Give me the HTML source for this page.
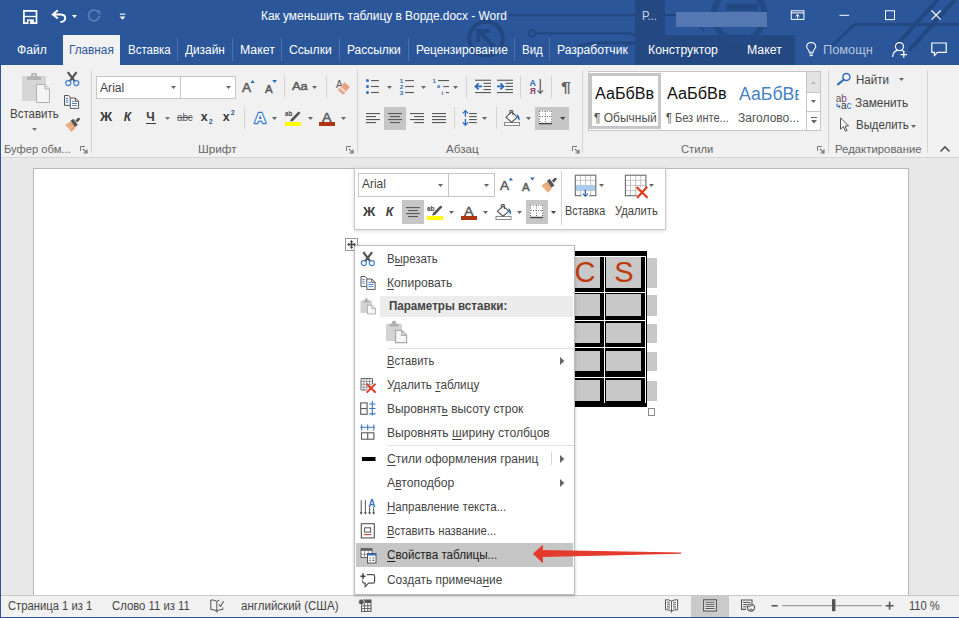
<!DOCTYPE html><html lang="ru"><head><meta charset="utf-8"><title>Word</title><style>html,body{margin:0;padding:0}body{width:959px;height:618px;position:relative;overflow:hidden;background:#e6e6e6;font-family:"Liberation Sans", sans-serif;}.a{position:absolute;display:block}.t{position:absolute;white-space:nowrap;line-height:1;transform-origin:0 0}u{text-decoration-thickness:1px;text-underline-offset:2px}</style></head><body>
<div class="a" style="left:0px;top:0px;width:959px;height:65px;background:#2b579a;"></div>
<div class="a" style="left:635px;top:0px;width:30px;height:35px;background:#244882;"></div>
<div class="a" style="left:635px;top:35px;width:160px;height:30px;background:#244882;"></div>
<svg class="a" style="left:0;top:0" width="959" height="65" viewBox="0 0 959 65"><g fill="none" stroke="#224781" stroke-width="2.4"><circle cx="486" cy="38.6" r="16.8" stroke-width="4"/><path d="M494.5 47L479.5 32M478.4 42V30.8H489.6" stroke-width="3.8"/><path d="M509 15.2H635" stroke-width="2.2"/><circle cx="532" cy="33.4" r="3.3" stroke-width="2"/><path d="M535.6 33.4H628Q633 33.6 635 36" stroke-width="2.2"/><path d="M577 46.4Q586 43.2 600 43H635" stroke-width="2.8"/><path d="M665 15.2H682Q690 15.6 696 22L704 31" stroke-width="1.8" stroke="#214378"/><circle cx="739" cy="15.4" r="25.4" stroke-width="6" stroke="#244a86"/><path d="M832.6 45L854.6 24.4H959" stroke-width="3"/><path d="M895 47L937.4 0M909 50.5L954.6 0" stroke-width="4"/></g><rect x="726" y="3.8" width="31.5" height="6.5" fill="#224781"/></svg>
<div class="a" style="left:676px;top:11.5px;width:91px;height:15.5px;background:#5578b2;"></div>
<div class="a" style="left:63px;top:35px;width:57px;height:31px;background:#f1f1f1;"></div>
<div class="a" style="left:0px;top:65px;width:959px;height:93px;background:#f1f1f1;"></div>
<div class="a" style="left:0px;top:157px;width:959px;height:1px;background:#d6d6d6;"></div>
<div class="a" style="left:0px;top:158px;width:959px;height:437px;background:#e8e8e8;"></div>
<div class="a" style="left:33px;top:168px;width:876px;height:430px;background:#ffffff;border:1px solid #b8b8b8;box-sizing:border-box;"></div>
<div class="a" style="left:0px;top:595px;width:959px;height:22px;background:#f1f1f1;"></div>
<div class="a" style="left:0px;top:595px;width:959px;height:1px;background:#c8c8c8;"></div>
<div class="a" style="left:0px;top:616.6px;width:959px;height:1.4px;background:#2b579a;"></div>
<div class="a" style="left:0px;top:0px;width:1.2px;height:618px;background:#2b579a;"></div>
<div class="a" style="left:177px;top:38px;width:1px;height:23px;background:#4d72ab;"></div>
<div class="a" style="left:232px;top:38px;width:1px;height:23px;background:#4d72ab;"></div>
<div class="a" style="left:281px;top:38px;width:1px;height:23px;background:#4d72ab;"></div>
<div class="a" style="left:339px;top:38px;width:1px;height:23px;background:#4d72ab;"></div>
<div class="a" style="left:408px;top:38px;width:1px;height:23px;background:#4d72ab;"></div>
<div class="a" style="left:514px;top:38px;width:1px;height:23px;background:#4d72ab;"></div>
<div class="a" style="left:549px;top:38px;width:1px;height:23px;background:#4d72ab;"></div>
<div class="a" style="left:91px;top:70px;width:1px;height:83px;background:#d4d4d4;"></div>
<div class="a" style="left:357px;top:70px;width:1px;height:83px;background:#d4d4d4;"></div>
<div class="a" style="left:582px;top:70px;width:1px;height:83px;background:#d4d4d4;"></div>
<div class="a" style="left:828px;top:70px;width:1px;height:83px;background:#d4d4d4;"></div>
<div class="a" style="left:927px;top:70px;width:1px;height:83px;background:#d4d4d4;"></div>
<div class="a" style="left:284px;top:76px;width:1px;height:22px;background:#d4d4d4;"></div>
<div class="a" style="left:326px;top:76px;width:1px;height:22px;background:#d4d4d4;"></div>
<div class="a" style="left:466px;top:76px;width:1px;height:22px;background:#d4d4d4;"></div>
<div class="a" style="left:520px;top:76px;width:1px;height:22px;background:#d4d4d4;"></div>
<div class="a" style="left:551px;top:76px;width:1px;height:22px;background:#d4d4d4;"></div>
<div class="a" style="left:244px;top:107px;width:1px;height:22px;background:#d4d4d4;"></div>
<div class="a" style="left:454px;top:107px;width:1px;height:22px;background:#d4d4d4;"></div>
<div class="a" style="left:496px;top:107px;width:1px;height:22px;background:#d4d4d4;"></div>
<svg class="a" style="left:80.3px;top:146px;" width="8" height="8" viewBox="0 0 8 8"><path d="M0.5 5V0.5H5" fill="none" stroke="#777" stroke-width="1"/><path d="M3 3L7 7M7 3.5V7H3.5" fill="none" stroke="#777" stroke-width="1.2"/></svg>
<svg class="a" style="left:346px;top:146px;" width="8" height="8" viewBox="0 0 8 8"><path d="M0.5 5V0.5H5" fill="none" stroke="#777" stroke-width="1"/><path d="M3 3L7 7M7 3.5V7H3.5" fill="none" stroke="#777" stroke-width="1.2"/></svg>
<svg class="a" style="left:571.5px;top:146px;" width="8" height="8" viewBox="0 0 8 8"><path d="M0.5 5V0.5H5" fill="none" stroke="#777" stroke-width="1"/><path d="M3 3L7 7M7 3.5V7H3.5" fill="none" stroke="#777" stroke-width="1.2"/></svg>
<svg class="a" style="left:816.8px;top:146px;" width="8" height="8" viewBox="0 0 8 8"><path d="M0.5 5V0.5H5" fill="none" stroke="#777" stroke-width="1"/><path d="M3 3L7 7M7 3.5V7H3.5" fill="none" stroke="#777" stroke-width="1.2"/></svg>
<svg class="a" style="left:939px;top:145px;" width="12" height="8" viewBox="0 0 12 8"><path d="M1.5 6.5L6 2L10.5 6.5" fill="none" stroke="#555" stroke-width="1.6"/></svg>
<svg class="a" style="left:31.5px;top:128px;" width="5" height="3" viewBox="0 0 5 3"><path d="M0 0H5L2.5 3Z" fill="#777"/></svg>
<div class="a" style="left:96px;top:76px;width:85px;height:23px;background:#fff;border:1px solid #c6c6c6;box-sizing:border-box;"></div>
<div class="a" style="left:180px;top:76px;width:56px;height:23px;background:#fff;border:1px solid #c6c6c6;box-sizing:border-box;"></div>
<svg class="a" style="left:171px;top:86px;" width="5" height="3" viewBox="0 0 5 3"><path d="M0 0H5L2.5 3Z" fill="#666"/></svg>
<svg class="a" style="left:226px;top:86px;" width="5" height="3" viewBox="0 0 5 3"><path d="M0 0H5L2.5 3Z" fill="#666"/></svg>
<div class="a" style="left:146px;top:122.8px;width:9.6px;height:1.3px;background:#3b3b3b;"></div>
<svg class="a" style="left:165px;top:117px;" width="5" height="3" viewBox="0 0 5 3"><path d="M0 0H5L2.5 3Z" fill="#777"/></svg>
<svg class="a" style="left:312px;top:86px;" width="5" height="3" viewBox="0 0 5 3"><path d="M0 0H5L2.5 3Z" fill="#666"/></svg>
<svg class="a" style="left:272px;top:116.5px;" width="5" height="3" viewBox="0 0 5 3"><path d="M0 0H5L2.5 3Z" fill="#666"/></svg>
<div class="a" style="left:285px;top:122px;width:16px;height:4px;background:#ffff00;"></div>
<svg class="a" style="left:307.5px;top:116.5px;" width="5" height="3" viewBox="0 0 5 3"><path d="M0 0H5L2.5 3Z" fill="#666"/></svg>
<div class="a" style="left:319px;top:122px;width:16px;height:4px;background:#b03312;"></div>
<svg class="a" style="left:341px;top:116.5px;" width="5" height="3" viewBox="0 0 5 3"><path d="M0 0H5L2.5 3Z" fill="#666"/></svg>
<svg class="a" style="left:387px;top:86px;" width="5" height="3" viewBox="0 0 5 3"><path d="M0 0H5L2.5 3Z" fill="#666"/></svg>
<svg class="a" style="left:421px;top:86px;" width="5" height="3" viewBox="0 0 5 3"><path d="M0 0H5L2.5 3Z" fill="#666"/></svg>
<svg class="a" style="left:453px;top:86px;" width="5" height="3" viewBox="0 0 5 3"><path d="M0 0H5L2.5 3Z" fill="#666"/></svg>
<div class="a" style="left:384px;top:107px;width:22px;height:23px;background:#c6c6c6;"></div>
<svg class="a" style="left:366px;top:113px;" width="14" height="14" viewBox="0 0 14 14"><rect x="0" y="0.00" width="14" height="1.1" fill="#5a5a5a"/><rect x="0" y="3.00" width="10" height="1.1" fill="#5a5a5a"/><rect x="0" y="6.00" width="14" height="1.1" fill="#5a5a5a"/><rect x="0" y="9.00" width="10" height="1.1" fill="#5a5a5a"/></svg>
<svg class="a" style="left:388px;top:113px;" width="14" height="14" viewBox="0 0 14 14"><rect x="0.0" y="0.00" width="14" height="1.1" fill="#5a5a5a"/><rect x="2.0" y="3.00" width="10" height="1.1" fill="#5a5a5a"/><rect x="0.0" y="6.00" width="14" height="1.1" fill="#5a5a5a"/><rect x="2.0" y="9.00" width="10" height="1.1" fill="#5a5a5a"/></svg>
<svg class="a" style="left:410px;top:113px;" width="14" height="14" viewBox="0 0 14 14"><rect x="0" y="0.00" width="14" height="1.1" fill="#5a5a5a"/><rect x="4" y="3.00" width="10" height="1.1" fill="#5a5a5a"/><rect x="0" y="6.00" width="14" height="1.1" fill="#5a5a5a"/><rect x="4" y="9.00" width="10" height="1.1" fill="#5a5a5a"/></svg>
<svg class="a" style="left:432px;top:113px;" width="14" height="14" viewBox="0 0 14 14"><rect x="0" y="0.00" width="14" height="1.1" fill="#5a5a5a"/><rect x="0" y="3.00" width="14" height="1.1" fill="#5a5a5a"/><rect x="0" y="6.00" width="14" height="1.1" fill="#5a5a5a"/><rect x="0" y="9.00" width="14" height="1.1" fill="#5a5a5a"/></svg>
<svg class="a" style="left:482px;top:117px;" width="5" height="3" viewBox="0 0 5 3"><path d="M0 0H5L2.5 3Z" fill="#666"/></svg>
<svg class="a" style="left:526px;top:117px;" width="5" height="3" viewBox="0 0 5 3"><path d="M0 0H5L2.5 3Z" fill="#666"/></svg>
<div class="a" style="left:535px;top:107px;width:34px;height:23px;background:#c6c6c6;"></div>
<svg class="a" style="left:559.5px;top:117px;" width="5.5" height="3" viewBox="0 0 5.5 3"><path d="M0 0H5.5L2.75 3Z" fill="#444"/></svg>
<div class="a" style="left:588px;top:71px;width:233px;height:60px;background:#fff;border:1px solid #c6c6c6;box-sizing:border-box;"></div>
<div class="a" style="left:589px;top:73px;width:72px;height:56px;border:3px solid #c6c6c6;box-sizing:border-box;"></div>
<div class="a" style="left:807px;top:72px;width:13px;height:21px;background:#e3e3e3;"></div>
<div class="a" style="left:806px;top:72px;width:1px;height:58px;background:#c6c6c6;"></div>
<div class="a" style="left:807px;top:92px;width:13px;height:1px;background:#c6c6c6;"></div>
<div class="a" style="left:807px;top:111px;width:13px;height:1px;background:#c6c6c6;"></div>
<svg class="a" style="left:811px;top:81px;" width="5" height="3" viewBox="0 0 5 3"><path d="M0 3H5L2.5 0Z" fill="#bbb"/></svg>
<svg class="a" style="left:811px;top:100px;" width="5" height="3" viewBox="0 0 5 3"><path d="M0 0H5L2.5 3Z" fill="#666"/></svg>
<svg class="a" style="left:810.5px;top:117px;" width="6" height="8" viewBox="0 0 6 8"><path d="M0 0.5H6" stroke="#666" stroke-width="1"/><path d="M0 3H6L3 6.5Z" fill="#666"/></svg>
<svg class="a" style="left:899px;top:78px;" width="5" height="3" viewBox="0 0 5 3"><path d="M0 0H5L2.5 3Z" fill="#666"/></svg>
<svg class="a" style="left:911px;top:124.5px;" width="5" height="3" viewBox="0 0 5 3"><path d="M0 0H5L2.5 3Z" fill="#666"/></svg>
<div class="a" style="left:560px;top:250.5px;width:86.7px;height:156.5px;background:#000;"></div>
<div class="a" style="left:560px;top:257px;width:40px;height:31px;background:#c8c8c8;"></div>
<div class="a" style="left:606px;top:257px;width:35px;height:31px;background:#c8c8c8;"></div>
<div class="a" style="left:647.4px;top:258px;width:9.6px;height:30px;background:#c8c8c8;"></div>
<div class="a" style="left:560px;top:294px;width:40px;height:22px;background:#c8c8c8;"></div>
<div class="a" style="left:606px;top:294px;width:35px;height:22px;background:#c8c8c8;"></div>
<div class="a" style="left:647.4px;top:295px;width:9.6px;height:21px;background:#c8c8c8;"></div>
<div class="a" style="left:560px;top:322.5px;width:40px;height:20.5px;background:#c8c8c8;"></div>
<div class="a" style="left:606px;top:322.5px;width:35px;height:20.5px;background:#c8c8c8;"></div>
<div class="a" style="left:647.4px;top:323.5px;width:9.6px;height:19.5px;background:#c8c8c8;"></div>
<div class="a" style="left:560px;top:350.5px;width:40px;height:20.5px;background:#c8c8c8;"></div>
<div class="a" style="left:606px;top:350.5px;width:35px;height:20.5px;background:#c8c8c8;"></div>
<div class="a" style="left:647.4px;top:351.5px;width:9.6px;height:19.5px;background:#c8c8c8;"></div>
<div class="a" style="left:560px;top:379.5px;width:40px;height:21.5px;background:#c8c8c8;"></div>
<div class="a" style="left:606px;top:379.5px;width:35px;height:21.5px;background:#c8c8c8;"></div>
<div class="a" style="left:647.4px;top:380.5px;width:9.6px;height:20.5px;background:#c8c8c8;"></div>
<div class="a" style="left:560px;top:255.6px;width:85.5px;height:1px;background:#fff;"></div>
<div class="a" style="left:560px;top:292.2px;width:85.5px;height:1px;background:#fff;"></div>
<div class="a" style="left:560px;top:320.3px;width:85.5px;height:1px;background:#fff;"></div>
<div class="a" style="left:560px;top:347.3px;width:85.5px;height:1px;background:#fff;"></div>
<div class="a" style="left:560px;top:376.5px;width:85.5px;height:1px;background:#fff;"></div>
<div class="a" style="left:604px;top:255.6px;width:1px;height:147px;background:#fff;"></div>
<div class="a" style="left:645px;top:255.6px;width:1px;height:147px;background:#fff;"></div>
<div class="a" style="left:647.5px;top:408px;width:7.5px;height:7.5px;background:#fff;border:1px solid #8a8a8a;box-sizing:border-box;"></div>
<div class="a" style="left:345px;top:238.3px;width:13px;height:12.5px;background:#fff;border:1px solid #9a9a9a;box-sizing:border-box;"></div>
<div class="a" style="left:354px;top:167.5px;width:311.5px;height:62px;background:#fff;border:1px solid #c8c8c8;box-sizing:border-box;box-shadow:0 1px 4px rgba(0,0,0,0.16);"></div>
<div class="a" style="left:358px;top:173px;width:91px;height:24px;background:#fff;border:1px solid #c6c6c6;box-sizing:border-box;"></div>
<div class="a" style="left:448px;top:173px;width:46.5px;height:24px;background:#fff;border:1px solid #c6c6c6;box-sizing:border-box;"></div>
<svg class="a" style="left:438px;top:183.5px;" width="5" height="3" viewBox="0 0 5 3"><path d="M0 0H5L2.5 3Z" fill="#666"/></svg>
<svg class="a" style="left:484px;top:183.5px;" width="5" height="3" viewBox="0 0 5 3"><path d="M0 0H5L2.5 3Z" fill="#666"/></svg>
<div class="a" style="left:560.5px;top:171px;width:1px;height:54px;background:#d4d4d4;"></div>
<div class="a" style="left:402px;top:200px;width:22px;height:24px;background:#c6c6c6;"></div>
<svg class="a" style="left:406px;top:206.5px;" width="14" height="14" viewBox="0 0 14 14"><rect x="0.0" y="0.00" width="14" height="1.1" fill="#5a5a5a"/><rect x="2.0" y="3.00" width="10" height="1.1" fill="#5a5a5a"/><rect x="0.0" y="6.00" width="14" height="1.1" fill="#5a5a5a"/><rect x="2.0" y="9.00" width="10" height="1.1" fill="#5a5a5a"/></svg>
<div class="a" style="left:427px;top:216px;width:16px;height:4px;background:#ffff00;"></div>
<svg class="a" style="left:449px;top:210.5px;" width="5" height="3" viewBox="0 0 5 3"><path d="M0 0H5L2.5 3Z" fill="#666"/></svg>
<div class="a" style="left:461px;top:216px;width:16px;height:4px;background:#b03312;"></div>
<svg class="a" style="left:483px;top:210.5px;" width="5" height="3" viewBox="0 0 5 3"><path d="M0 0H5L2.5 3Z" fill="#666"/></svg>
<svg class="a" style="left:517px;top:210.5px;" width="5" height="3" viewBox="0 0 5 3"><path d="M0 0H5L2.5 3Z" fill="#666"/></svg>
<div class="a" style="left:526px;top:200px;width:21.5px;height:24px;background:#c6c6c6;"></div>
<svg class="a" style="left:551px;top:210.5px;" width="5" height="3" viewBox="0 0 5 3"><path d="M0 0H5L2.5 3Z" fill="#444"/></svg>
<svg class="a" style="left:599px;top:183.5px;" width="5" height="3" viewBox="0 0 5 3"><path d="M0 0H5L2.5 3Z" fill="#666"/></svg>
<svg class="a" style="left:649px;top:183.5px;" width="5" height="3" viewBox="0 0 5 3"><path d="M0 0H5L2.5 3Z" fill="#666"/></svg>
<div class="a" style="left:354px;top:245px;width:221px;height:349.5px;background:#fff;border:1px solid #bdbdbd;box-sizing:border-box;box-shadow:0 1px 3px rgba(0,0,0,0.22);"></div>
<div class="a" style="left:380px;top:295.5px;width:193px;height:21px;background:#ececec;"></div>
<div class="a" style="left:388px;top:347.5px;width:186px;height:1px;background:#e1e1e1;"></div>
<div class="a" style="left:388px;top:445px;width:186px;height:1px;background:#e1e1e1;"></div>
<div class="a" style="left:355.5px;top:543px;width:217.5px;height:24px;background:#c6c6c6;"></div>
<div class="a" style="left:550.5px;top:452px;width:1px;height:13px;background:#d8d8d8;"></div>
<div class="a" style="left:691px;top:596px;width:37.8px;height:20.6px;background:#cacaca;"></div>
<svg class="a" style="left:0;top:0" width="959" height="618" viewBox="0 0 959 618"><rect x="22" y="76" width="24" height="25" rx="1" fill="#d6d6d6"/><path d="M27 80V76.5H31V74.5Q31 73 32.5 73H35.5Q37 73 37 74.5V76.5H41V80Z" fill="#b3b3b3"/><rect x="33" y="74.3" width="2" height="1.8" fill="#e6e6e6"/><path d="M36.5 84.5H45L49.5 89V102.5H36.5Z" fill="#f4f4f4" stroke="#b0b0b0" stroke-width="1"/><path d="M45 84.5V89H49.5" fill="none" stroke="#b0b0b0" stroke-width="1"/><g transform="translate(65 71) scale(1.0)"><path d="M2.8 1.2L9.6 10.2M11.6 1.2L4.8 10.2" stroke="#535353" stroke-width="2.2" fill="none" stroke-linecap="butt"/><circle cx="3.3" cy="12.1" r="2.55" fill="none" stroke="#3f7fcf" stroke-width="1.15"/><circle cx="11.3" cy="12.1" r="2.55" fill="none" stroke="#3f7fcf" stroke-width="1.15"/></g><g transform="translate(64 95)"><path d="M0.5 0.5H4.6L6.6 2.5V3M0.5 0.5V10.4H5.8" fill="none" stroke="#555" stroke-width="1"/><path d="M1.9 3.4H4.2M1.9 5.3H4.2M1.9 7.2H4.2" stroke="#3a76c4" stroke-width="0.9"/><path d="M6.3 3H11.3L14.6 6.3V13.4H6.3Z" fill="#fff" stroke="#555" stroke-width="1"/><path d="M11.3 3V6.3H14.6" fill="none" stroke="#555" stroke-width="1"/><path d="M8 6.4H10.4M8 8.5H13M8 10.6H13" stroke="#3a76c4" stroke-width="0.9"/></g><g transform="translate(65 117.5) scale(1.0)"><path d="M0.5 7.5L6 3.8L10.5 10.2L6.5 14.5Z" fill="#e9a676"/><path d="M2.5 9.8L5 8.2M4 12L7.8 9.2" stroke="#f6d2b6" stroke-width="0.8"/><path d="M5.6 3.2L8.4 1.3L12.8 7.6L10 9.6Z" fill="#555"/><path d="M10.4 2.8L12.9 0.5Q14 -0.2 14.8 0.8Q15.4 1.9 14.4 2.7L12 4.9Z" fill="#555"/></g><path d="M250.4 83L252.6 80L254.8 83Z" fill="#2f6bbd"/><path d="M272.2 80H277L274.6 83Z" fill="#2f6bbd"/><text x="254.4" y="122.6" font-family="Liberation Sans, sans-serif" font-weight="bold" font-size="15.5" fill="#fff" stroke="#9cc3f0" stroke-width="3.2" stroke-linejoin="round" paint-order="stroke" opacity="0.9">A</text><text x="254.4" y="122.6" font-family="Liberation Sans, sans-serif" font-weight="bold" font-size="15.5" fill="#fff" stroke="#2f6fc4" stroke-width="1.9" stroke-linejoin="round" paint-order="stroke">A</text><path d="M298.5 111.5L300.5 113.0L293.0 121.0L290.0 121.5L291.0 119.0Z" fill="#555"/><g transform="translate(335.5 80)"><text x="0.5" y="7.6" font-family="Liberation Sans, sans-serif" font-size="10" fill="#555">A</text><path d="M9.6 2.6L13.9 6.2Q14.6 6.9 14 7.6L8.2 14.2Q7.6 14.8 6.9 14.2L2.6 10.6Q2 10 2.5 9.3L8.3 2.7Q8.9 2 9.6 2.6Z" fill="#e9a98a"/><path d="M4.6 7.2L9.8 11.8" stroke="#f7f0ea" stroke-width="1.3"/><path d="M8.2 5.4L11.5 8.3M9.4 4.2L12.6 7.1M7.2 6.6L10.4 9.5" stroke="#d98e6c" stroke-width="0.7" stroke-dasharray="0.8 0.8"/></g><circle cx="367.5" cy="80.6" r="1.5" fill="#2f6bbd"/><rect x="371" y="80.05" width="8" height="1.1" fill="#5a5a5a"/><circle cx="367.5" cy="86.5" r="1.5" fill="#2f6bbd"/><rect x="371" y="85.95" width="8" height="1.1" fill="#5a5a5a"/><circle cx="367.5" cy="92.5" r="1.5" fill="#2f6bbd"/><rect x="371" y="91.95" width="8" height="1.1" fill="#5a5a5a"/><text x="399.8" y="82.8" font-family="Liberation Sans, sans-serif" font-weight="bold" font-size="6.2" fill="#2f6bbd">1</text><rect x="405.2" y="80.05" width="8.8" height="1.1" fill="#5a5a5a"/><text x="399.8" y="88.7" font-family="Liberation Sans, sans-serif" font-weight="bold" font-size="6.2" fill="#2f6bbd">2</text><rect x="405.2" y="85.95" width="8.8" height="1.1" fill="#5a5a5a"/><text x="399.8" y="94.7" font-family="Liberation Sans, sans-serif" font-weight="bold" font-size="6.2" fill="#2f6bbd">3</text><rect x="405.2" y="91.95" width="8.8" height="1.1" fill="#5a5a5a"/><text x="432.6" y="83" font-family="Liberation Sans, sans-serif" font-weight="bold" font-size="6" fill="#2f6bbd">1</text><rect x="438" y="80" width="11" height="1.1" fill="#5a5a5a"/><text x="437" y="88.3" font-family="Liberation Sans, sans-serif" font-weight="bold" font-size="5.5" fill="#2f6bbd">a</text><rect x="443.2" y="86" width="5.8" height="1.1" fill="#5a5a5a"/><text x="441.6" y="94.6" font-family="Liberation Sans, sans-serif" font-weight="bold" font-size="6" fill="#2f6bbd">i</text><rect x="446" y="92" width="3" height="1.1" fill="#5a5a5a"/><rect x="475" y="79.7" width="16" height="1.1" fill="#5a5a5a"/><rect x="483.5" y="82.8" width="7.5" height="1.1" fill="#5a5a5a"/><rect x="483.5" y="85.9" width="7.5" height="1.1" fill="#5a5a5a"/><rect x="483.5" y="89.0" width="7.5" height="1.1" fill="#5a5a5a"/><rect x="475" y="92.0" width="16" height="1.1" fill="#5a5a5a"/><path d="M482 86.4H476.5M478.6 83.4L475.4 86.4L478.6 89.4" fill="none" stroke="#2f6bbd" stroke-width="1.7"/><rect x="497" y="79.7" width="16" height="1.1" fill="#5a5a5a"/><rect x="505.5" y="82.8" width="7.5" height="1.1" fill="#5a5a5a"/><rect x="505.5" y="85.9" width="7.5" height="1.1" fill="#5a5a5a"/><rect x="505.5" y="89.0" width="7.5" height="1.1" fill="#5a5a5a"/><rect x="497" y="92.0" width="16" height="1.1" fill="#5a5a5a"/><path d="M497 86.4H502.5M500.4 83.4L503.6 86.4L500.4 89.4" fill="none" stroke="#2f6bbd" stroke-width="1.7"/><text x="529.6" y="85.6" font-family="Liberation Sans, sans-serif" font-weight="bold" font-size="9" fill="#2f6bbd">А</text><text x="529.8" y="93.8" font-family="Liberation Sans, sans-serif" font-weight="bold" font-size="8.4" fill="#8a3b66">Я</text><path d="M540.3 79V93M537.6 90.4L540.3 93.4L543 90.4" fill="none" stroke="#5a5a5a" stroke-width="1.2"/><path d="M465.40000000000003 110.8V116.8M465.40000000000003 119V125M462.8 113.4L465.40000000000003 110.6L468.0 113.4M462.8 122.4L465.40000000000003 125.2L468.0 122.4" fill="none" stroke="#2f6bbd" stroke-width="1.3"/><rect x="469.1" y="113" width="7.7" height="1.1" fill="#5a5a5a"/><rect x="469.1" y="116" width="7.7" height="1.1" fill="#5a5a5a"/><rect x="469.1" y="119" width="7.7" height="1.1" fill="#5a5a5a"/><rect x="469.1" y="122" width="7.7" height="1.1" fill="#5a5a5a"/><g transform="translate(504 110)"><rect x="0.5" y="12.5" width="15" height="3" fill="#fff" stroke="#8a8a8a" stroke-width="1"/><path d="M7.5 2L13.3 7.2L7.6 12.2L2 7.2Z" fill="#fff" stroke="#555" stroke-width="1.1"/><path d="M5.8 4.4V0.5H8.8V5" fill="none" stroke="#555" stroke-width="1"/><path d="M12.6 4.2Q16.2 5.4 15.6 10.6Q13.8 10 13.6 7.6Z" fill="#2f6bbd"/></g><rect x="539" y="110.6" width="13" height="12" fill="#fff"/><path d="M539.5 111.1H551.5M539.5 116.6H551.5M539.5 111.1V122.6M545.5 111.1V122.6M551.5 111.1V122.6" stroke="#666" stroke-width="1" stroke-dasharray="1 1.5" fill="none"/><rect x="539" y="123.0" width="13" height="1.3" fill="#444"/><circle cx="846.4" cy="76.9" r="3.5" fill="#fff" fill-opacity="0.6" stroke="#2f6bbd" stroke-width="1.5"/><path d="M843.6 79.8L838 84.4" stroke="#2f6bbd" stroke-width="2.1" stroke-linecap="round"/><text x="835.8" y="101.6" font-family="Liberation Sans, sans-serif" font-size="10" fill="#555">a<tspan fill="#8a3b66">b</tspan></text><text x="841" y="108.6" font-family="Liberation Sans, sans-serif" font-size="10" fill="#333">a<tspan fill="#2f6bbd">c</tspan></text><path d="M837 103.5V106.5H840M838.6 105L840.2 106.5L838.6 108" fill="none" stroke="#2f6bbd" stroke-width="1"/><path d="M840.5 117.8V129.2L843.4 126.6L845.4 131.2L847 130.5L845 126H848.6Z" fill="#fff" stroke="#555" stroke-width="1" stroke-linejoin="round"/><path d="M23.9 10.9H36.5V23.2H23.9Z" fill="none" stroke="#fff" stroke-width="1.7"/><path d="M24 16.5H36.4" fill="none" stroke="#fff" stroke-width="1.3"/><rect x="27" y="19.4" width="6.8" height="4.2" fill="#fff"/><rect x="28.4" y="20.8" width="1.7" height="3" fill="#2b579a"/><path d="M57.8 10.2L52.8 14.4L57.8 18.6M53.2 14.4H61Q65.2 14.6 65.2 18.2Q65 21.6 60.4 22.1" fill="none" stroke="#fff" stroke-width="2"/><path d="M72 15H77L74.5 18Z" fill="#fff"/><path d="M97.6 11.4A5.4 5.4 0 1 0 99.3 16.2" fill="none" stroke="#5d7fb8" stroke-width="1.7"/><path d="M95.6 10.6H100.2V15.2Z" fill="#5d7fb8"/><rect x="119.8" y="13.6" width="5.4" height="1.1" fill="#fff"/><path d="M119.6 16.6H125.4L122.5 19.8Z" fill="#fff"/><rect x="791.3" y="10.8" width="12.6" height="8.6" fill="none" stroke="#fff" stroke-width="1"/><path d="M791.3 12.9H803.9" stroke="#fff" stroke-width="1"/><path d="M797.6 18.6V14.6M795.7 16.4L797.6 14.5L799.5 16.4" fill="none" stroke="#fff" stroke-width="1"/><rect x="839.5" y="14.8" width="9.6" height="1" fill="#fff"/><rect x="885.5" y="10.8" width="9" height="8.8" fill="none" stroke="#fff" stroke-width="1"/><path d="M931.5 10.5L940.7 19.7M940.7 10.5L931.5 19.7" stroke="#fff" stroke-width="1.1"/><path d="M809.3 52.2Q809.2 50.6 807.8 49Q806.4 47.3 806.6 46.4Q807 42.6 811.2 42.5Q815.4 42.6 815.8 46.4Q816 47.3 814.6 49Q813.2 50.6 813.1 52.2Z" fill="none" stroke="#fff" stroke-width="1.1"/><path d="M809.2 53.9H813.2M809.6 55.6H812.8" stroke="#fff" stroke-width="1"/><circle cx="899.5" cy="46.6" r="4" fill="none" stroke="#fff" stroke-width="1.2"/><path d="M892.6 57Q893 51.4 897.4 50.4M901.6 50.4Q903.4 50.8 904.4 52" fill="none" stroke="#fff" stroke-width="1.2"/><path d="M900.6 54.6H907M903.8 51.4V57.8" stroke="#fff" stroke-width="1.2"/><path d="M931.8 43H946.2V52.4H937.4L934.4 55.6V52.4H931.8Z" fill="none" stroke="#fff" stroke-width="1.2" stroke-linejoin="miter"/><path d="M351.5 241.2V247.8M348.2 244.5H354.8" stroke="#444" stroke-width="1.3"/><path d="M349.7 242.3L351.5 240L353.3 242.3ZM349.7 246.7L351.5 249L353.3 246.7ZM349.3 242.7L347 244.5L349.3 246.3ZM353.7 242.7L356 244.5L353.7 246.3Z" fill="#444"/><path d="M508.6 180.6L510.8 177.6L513 180.6Z" fill="#2f6bbd"/><path d="M530 177.6H534.8L532.4 180.6Z" fill="#2f6bbd"/><g transform="translate(541 177.5) scale(1.05)"><path d="M0.5 7.5L6 3.8L10.5 10.2L6.5 14.5Z" fill="#e9a676"/><path d="M2.5 9.8L5 8.2M4 12L7.8 9.2" stroke="#f6d2b6" stroke-width="0.8"/><path d="M5.6 3.2L8.4 1.3L12.8 7.6L10 9.6Z" fill="#555"/><path d="M10.4 2.8L12.9 0.5Q14 -0.2 14.8 0.8Q15.4 1.9 14.4 2.7L12 4.9Z" fill="#555"/></g><path d="M440.5 205.5L442.5 207.0L435.0 215.0L432.0 215.5L433.0 213.0Z" fill="#555"/><g transform="translate(495.5 204)"><rect x="0.5" y="12.5" width="15" height="3" fill="#fff" stroke="#8a8a8a" stroke-width="1"/><path d="M7.5 2L13.3 7.2L7.6 12.2L2 7.2Z" fill="#fff" stroke="#555" stroke-width="1.1"/><path d="M5.8 4.4V0.5H8.8V5" fill="none" stroke="#555" stroke-width="1"/><path d="M12.6 4.2Q16.2 5.4 15.6 10.6Q13.8 10 13.6 7.6Z" fill="#2f6bbd"/></g><rect x="530" y="204.5" width="13" height="12" fill="#fff"/><path d="M530.5 205.0H542.5M530.5 210.5H542.5M530.5 205.0V216.5M536.5 205.0V216.5M542.5 205.0V216.5" stroke="#666" stroke-width="1" stroke-dasharray="1 1.5" fill="none"/><rect x="530" y="216.9" width="13" height="1.3" fill="#444"/><rect x="575.3" y="175.2" width="20.5" height="20.5" fill="#fff"/><path d="M580.42 175.2V195.7M575.3 180.32H595.8" stroke="#c4c4c4" stroke-width="1"/><path d="M585.55 175.2V195.7M575.3 185.45H595.8" stroke="#c4c4c4" stroke-width="1"/><path d="M590.67 175.2V195.7M575.3 190.57H595.8" stroke="#c4c4c4" stroke-width="1"/><rect x="576" y="185.4" width="19" height="4.8" fill="#a9cdf0"/><rect x="575.3" y="175.2" width="20.5" height="20.5" fill="none" stroke="#6a6a6a" stroke-width="1.1"/><rect x="581.5" y="193" width="7.6" height="4.5" fill="#fff"/><path d="M585.3 189.8V196.2M582.7 193.6L585.3 196.4L587.9 193.6" fill="none" stroke="#2f6bbd" stroke-width="1.3"/><rect x="625.4" y="175.2" width="20.5" height="20.5" fill="#fff"/><path d="M630.52 175.2V195.7M625.4 180.32H645.9" stroke="#c4c4c4" stroke-width="1"/><path d="M635.65 175.2V195.7M625.4 185.45H645.9" stroke="#c4c4c4" stroke-width="1"/><path d="M640.77 175.2V195.7M625.4 190.57H645.9" stroke="#c4c4c4" stroke-width="1"/><rect x="625.4" y="175.2" width="20.5" height="20.5" fill="none" stroke="#6a6a6a" stroke-width="1.1"/><rect x="637" y="187.5" width="11" height="10.5" fill="#fff"/><path d="M637.2 187.6L647 197.2M646.6 187.4L637.6 197.2" stroke="#e03c24" stroke-width="2.2" stroke-linecap="round"/><path d="M560 357L564.4 361L560 365Z" fill="#666"/><path d="M560 455L564.4 459L560 463Z" fill="#666"/><path d="M560 479L564.4 483L560 487Z" fill="#666"/><g transform="translate(360.5 251) scale(1.0)"><path d="M2.8 1.2L9.6 10.2M11.6 1.2L4.8 10.2" stroke="#535353" stroke-width="2.2" fill="none" stroke-linecap="butt"/><circle cx="3.3" cy="12.1" r="2.55" fill="none" stroke="#3f7fcf" stroke-width="1.15"/><circle cx="11.3" cy="12.1" r="2.55" fill="none" stroke="#3f7fcf" stroke-width="1.15"/></g><g transform="translate(360.5 276)"><path d="M0.5 0.5H4.6L6.6 2.5V3M0.5 0.5V10.4H5.8" fill="none" stroke="#555" stroke-width="1"/><path d="M1.9 3.4H4.2M1.9 5.3H4.2M1.9 7.2H4.2" stroke="#3a76c4" stroke-width="0.9"/><path d="M6.3 3H11.3L14.6 6.3V13.4H6.3Z" fill="#fff" stroke="#555" stroke-width="1"/><path d="M11.3 3V6.3H14.6" fill="none" stroke="#555" stroke-width="1"/><path d="M8 6.4H10.4M8 8.5H13M8 10.6H13" stroke="#3a76c4" stroke-width="0.9"/></g><g transform="translate(360.5 298) scale(1.0)"><rect x="0" y="2.4" width="11.5" height="12.5" rx="0.6" fill="#d3d3d3"/><path d="M2.6 4.4V2.4H4.4V1.2Q4.4 0.2 5.4 0.2H6.2Q7.2 0.2 7.2 1.2V2.4H9V4.4Z" fill="#b0b0b0"/><path d="M6.9 7.2H11.4L14.9 10.7V16H6.9Z" fill="#f6f6f6" stroke="#aaa" stroke-width="0.9"/><path d="M11.4 7.2V10.7H14.9" fill="none" stroke="#aaa" stroke-width="0.9"/></g><g transform="translate(386 320.5) scale(1.38)"><rect x="0" y="2.4" width="11.5" height="12.5" rx="0.6" fill="#d3d3d3"/><path d="M2.6 4.4V2.4H4.4V1.2Q4.4 0.2 5.4 0.2H6.2Q7.2 0.2 7.2 1.2V2.4H9V4.4Z" fill="#b0b0b0"/><path d="M6.9 7.2H11.4L14.9 10.7V16H6.9Z" fill="#f6f6f6" stroke="#aaa" stroke-width="0.9"/><path d="M11.4 7.2V10.7H14.9" fill="none" stroke="#aaa" stroke-width="0.9"/></g><rect x="361" y="378.5" width="11.5" height="11.5" fill="#fff"/><path d="M363.88 378.5V390.0M361 381.38H372.5" stroke="#999" stroke-width="1"/><path d="M366.75 378.5V390.0M361 384.25H372.5" stroke="#999" stroke-width="1"/><path d="M369.62 378.5V390.0M361 387.12H372.5" stroke="#999" stroke-width="1"/><path d="M361 378.5H372.5V384M361 378.5V390H366" fill="none" stroke="#666" stroke-width="1"/><path d="M367.2 384.4L375 392M375 384.4L367.2 392" stroke="#e03c24" stroke-width="2" stroke-linecap="round"/><rect x="360.7" y="402.9" width="6.4" height="11.4" fill="none" stroke="#5a5a5a" stroke-width="1.1"/><path d="M360.7 408.6H367.1" stroke="#5a5a5a" stroke-width="1.1"/><path d="M372.3 401V415.4M369.3 404H375.5M369.3 408.5H375.5M369.3 413.9H375.5" stroke="#3a76c4" stroke-width="1.1" fill="none"/><rect x="361.5" y="432.8" width="12.4" height="6.4" fill="none" stroke="#5a5a5a" stroke-width="1.1"/><path d="M367.7 432.8V439.2" stroke="#5a5a5a" stroke-width="1.1"/><path d="M360.2 427.2H374.8M361.6 424.5V430.6M367.7 424.5V430.6M373.8 424.5V430.6" stroke="#3a76c4" stroke-width="1.1" fill="none"/><rect x="362" y="457" width="13.5" height="4" fill="#000"/><path d="M361.2 500.2V514" stroke="#555" stroke-width="1"/><path d="M359.7 512.2L361.2 514.8L362.7 512.2Z" fill="#555"/><path d="M365.4 500.2V514" stroke="#555" stroke-width="1"/><path d="M363.9 512.2L365.4 514.8L366.9 512.2Z" fill="#555"/><path d="M369.6 507.2V514" stroke="#555" stroke-width="1"/><path d="M368.1 512.2L369.6 514.8L371.1 512.2Z" fill="#555"/><path d="M373.6 507.2V514" stroke="#555" stroke-width="1"/><path d="M372.1 512.2L373.6 514.8L375.1 512.2Z" fill="#555"/><text x="368.2" y="506.7" font-family="Liberation Sans, sans-serif" font-weight="bold" font-size="10" fill="#3a76c4">A</text><rect x="361.3" y="523.7" width="13" height="14.2" fill="#fff" stroke="#555" stroke-width="1.1"/><rect x="364.6" y="527.8" width="6" height="4.3" fill="none" stroke="#555" stroke-width="1"/><path d="M364.2 534.6H371" stroke="#d0402c" stroke-width="1.1"/><rect x="361" y="548.5" width="11" height="9" fill="#fff" stroke="#666" stroke-width="1"/><rect x="361" y="548.5" width="11" height="2.4" fill="#666"/><path d="M364.6 551V557.5M368.3 551V557.5M361 554.2H372" stroke="#888" stroke-width="0.9"/><rect x="367.5" y="553.5" width="8.5" height="9.5" fill="#fff" stroke="#555" stroke-width="1"/><rect x="367.5" y="553.5" width="8.5" height="2" fill="#2f6bbd"/><path d="M369.4 558H370.8M372.4 558H374.2M369.4 560.4H370.8M372.4 560.4H374.2" stroke="#555" stroke-width="1.1"/><path d="M366.8 574.6H373Q374.6 574.6 374.6 576.2V581.4Q374.6 583 373 583H368.6L365.2 586.6V583H364.2Q362.6 583 362.6 581.4V580.4" fill="none" stroke="#555" stroke-width="1.25"/><path d="M363 573.2V579.2M360.4 576.2H365.6" stroke="#444" stroke-width="1.5"/><path d="M532.8 553.8L542.9 544.8V550L681 552.4V553.8L542.9 557V563.2Z" fill="#e33b2e"/><path d="M216.8 601.4Q214 599.6 210.8 600V609.6Q214 609.2 216.8 611Q219.6 609.2 222.8 609.6V607.4M216.8 601.4V611M216.8 601.4Q218 600.6 219.4 600.2" fill="none" stroke="#555" stroke-width="1"/><path d="M218.8 604.4L220.6 606.4L223.6 601.2" fill="none" stroke="#555" stroke-width="1.1"/><path d="M215.8 611.2L216.8 612.4L217.8 611.2" fill="none" stroke="#555" stroke-width="0.8"/><rect x="361.5" y="600" width="9.5" height="11.4" fill="#fff" stroke="#555" stroke-width="1"/><rect x="361.5" y="600" width="9.5" height="3" fill="#555"/><path d="M364.6 603V611.4M367.8 603V611.4M361.5 605.8H371M361.5 608.6H371" stroke="#555" stroke-width="0.9"/><circle cx="361.4" cy="602" r="2.9" fill="#555" stroke="#f1f1f1" stroke-width="0.8"/><path d="M671.5 601Q668.6 599.4 665.5 599.8V609.8Q668.6 609.4 671.5 611Q674.4 609.4 677.6 609.8V599.8Q674.4 599.4 671.5 601Z" fill="#fff" stroke="#555" stroke-width="1"/><path d="M671.5 601V612.6M667 602.2H670M667 604.2H670M667 606.2H670M667 608H670M673 602.2H676M673 604.2H676M673 606.2H676M673 608H676" stroke="#555" stroke-width="0.9" fill="none"/><rect x="703.6" y="599.8" width="12.8" height="11.2" fill="#e8e8e8" stroke="#555" stroke-width="1.1"/><path d="M705.4 602.2H714.6M705.4 604.3H714.6M705.4 606.4H714.6M705.4 608.5H714.6" stroke="#555" stroke-width="1"/><path d="M746 609.4H741.5V600H752V603.4" fill="none" stroke="#555" stroke-width="1.1"/><path d="M743.2 602.4H750.2M743.2 604.6H747.6M743.2 606.8H746.4" stroke="#555" stroke-width="1"/><circle cx="751" cy="607.6" r="3.6" fill="#f1f1f1" stroke="#555" stroke-width="1.2"/><path d="M748.4 606.2Q750 607.4 751 605.6Q752 604.4 753.6 605.4M749.4 610Q750.6 608.4 752.6 609.6" fill="none" stroke="#555" stroke-width="1"/><rect x="771.6" y="605" width="6" height="1.6" fill="#555"/><rect x="782" y="605.2" width="100" height="1" fill="#8a8a8a"/><rect x="832" y="599.2" width="3.4" height="12" fill="#555"/><path d="M885.6 605.8H893.6M889.6 601.8V609.8" stroke="#555" stroke-width="1.6"/></svg>
<span class="t" style="left:260.58px;top:9.84px;font-size:12px;color:#fff;transform:scaleX(0.9915);">Как уменьшить таблицу в Ворде.docx - Word</span>
<span class="t" style="left:641.58px;top:9.84px;font-size:12px;color:#c8d3e6;transform:scaleX(0.9384);">Р...</span>
<span class="t" style="left:16.58px;top:43.84px;font-size:12px;color:#fff;transform:scaleX(1.0090);">Файл</span>
<span class="t" style="left:68.58px;top:43.84px;font-size:12px;color:#2b579a;transform:scaleX(0.9801);">Главная</span>
<span class="t" style="left:127.58px;top:43.84px;font-size:12px;color:#fff;transform:scaleX(0.9590);">Вставка</span>
<span class="t" style="left:184.58px;top:43.84px;font-size:12px;color:#fff;transform:scaleX(0.9860);">Дизайн</span>
<span class="t" style="left:239.58px;top:43.84px;font-size:12px;color:#fff;transform:scaleX(1.0239);">Макет</span>
<span class="t" style="left:288.58px;top:43.84px;font-size:12px;color:#fff;transform:scaleX(1.0125);">Ссылки</span>
<span class="t" style="left:346.58px;top:43.84px;font-size:12px;color:#fff;transform:scaleX(0.9985);">Рассылки</span>
<span class="t" style="left:415.58px;top:43.84px;font-size:12px;color:#fff;transform:scaleX(0.9904);">Рецензирование</span>
<span class="t" style="left:521.58px;top:43.84px;font-size:12px;color:#fff;transform:scaleX(0.9568);">Вид</span>
<span class="t" style="left:556.58px;top:43.84px;font-size:12px;color:#fff;transform:scaleX(1.0114);">Разработчик</span>
<span class="t" style="left:647.58px;top:43.84px;font-size:12px;color:#fff;transform:scaleX(1.0198);">Конструктор</span>
<span class="t" style="left:746.58px;top:43.84px;font-size:12px;color:#fff;transform:scaleX(1.0239);">Макет</span>
<span class="t" style="left:822.58px;top:43.84px;font-size:12px;color:#b5c4de;transform:scaleX(1.0652);">Помощн</span>
<span class="t" style="left:3.65px;top:144.94px;font-size:10px;color:#666666;transform:scaleX(1.1175);">Буфер обм...</span>
<span class="t" style="left:197.65px;top:144.94px;font-size:10px;color:#666666;transform:scaleX(1.1745);">Шрифт</span>
<span class="t" style="left:445.65px;top:144.94px;font-size:10px;color:#666666;transform:scaleX(1.1635);">Абзац</span>
<span class="t" style="left:680.65px;top:144.94px;font-size:10px;color:#666666;transform:scaleX(1.1158);">Стили</span>
<span class="t" style="left:834.65px;top:144.94px;font-size:10px;color:#666666;transform:scaleX(1.1373);">Редактирование</span>
<span class="t" style="left:9.58px;top:107.84px;font-size:12px;color:#444444;transform:scaleX(0.9588);">Вставить</span>
<span class="t" style="left:99.58px;top:81.84px;font-size:12px;color:#444444;transform:scaleX(1.0110);">Arial</span>
<span class="t" style="left:100.24px;top:111.04px;font-size:12px;color:#3b3b3b;font-weight:bold;transform:scaleX(1.12);">Ж</span>
<span class="t" style="left:123.64px;top:111.04px;font-size:12px;color:#3b3b3b;font-weight:bold;font-style:italic;">К</span>
<span class="t" style="left:146.14px;top:111.04px;font-size:12px;color:#3b3b3b;font-weight:bold;">Ч</span>
<span class="t" style="left:176.615px;top:111.69px;font-size:11px;color:#555;transform:scaleX(0.8854);"><s>abc</s></span>
<span class="t" style="left:200.625px;top:110.62px;font-size:12.5px;color:#3b3b3b;font-weight:bold;">x</span>
<span class="t" style="left:208.79px;top:118.07px;font-size:7px;color:#2b579a;font-weight:bold;">2</span>
<span class="t" style="left:222.625px;top:110.62px;font-size:12.5px;color:#3b3b3b;font-weight:bold;">x</span>
<span class="t" style="left:230.79px;top:109.07px;font-size:7px;color:#2b579a;font-weight:bold;">2</span>
<span class="t" style="left:242.22799999999998px;top:82.25px;font-size:12.4px;color:#595959;-webkit-text-stroke:0.45px #595959;transform:scaleX(1.1);">A</span>
<span class="t" style="left:264.882px;top:83.78px;font-size:10.6px;color:#595959;-webkit-text-stroke:0.45px #595959;transform:scaleX(1.08);">A</span>
<span class="t" style="left:291.5975px;top:80.87px;font-size:11.5px;color:#595959;transform:scaleX(1.1186);-webkit-text-stroke:0.45px #595959;">Aa</span>
<span class="t" style="left:284.72px;top:110.23px;font-size:8px;color:#444;font-weight:bold;transform:scaleX(0.7834);">ab</span>
<span class="t" style="left:322.11px;top:110.60px;font-size:13px;color:#595959;-webkit-text-stroke:0.45px #595959;transform:scaleX(1.1);">A</span>
<span class="t" style="left:561.3499999999999px;top:78.60px;font-size:15px;color:#666;font-weight:bold;transform:scaleX(1.2);">¶</span>
<span class="t" style="left:595.44px;top:86.26px;font-size:16px;color:#111;transform:scaleX(1.0076);">АаБбВв</span>
<span class="t" style="left:666.94px;top:86.26px;font-size:16px;color:#111;transform:scaleX(1.0161);">АаБбВв</span>
<span class="t" style="left:738.87px;top:84.76px;font-size:18px;color:#4583c4;transform:scaleX(0.9810);clip-path:inset(0 5px 0 0);">АаБбВв</span>
<span class="t" style="left:593.58px;top:111.64px;font-size:12px;color:#505050;transform:scaleX(0.9992);">¶ Обычный</span>
<span class="t" style="left:665.58px;top:111.64px;font-size:12px;color:#505050;transform:scaleX(0.9194);">¶ Без инте...</span>
<span class="t" style="left:737.58px;top:111.64px;font-size:12px;color:#505050;transform:scaleX(1.0018);">Заголово...</span>
<span class="t" style="left:855.58px;top:73.54px;font-size:12px;color:#444444;transform:scaleX(0.9658);">Найти</span>
<span class="t" style="left:854.88px;top:96.54px;font-size:12px;color:#444444;transform:scaleX(0.9860);">Заменить</span>
<span class="t" style="left:855.58px;top:119.44px;font-size:12px;color:#444444;transform:scaleX(0.9534);">Выделить</span>
<span class="t" style="left:574.53px;top:257.75px;font-size:29px;color:#be3a0c;">C</span>
<span class="t" style="left:614.13px;top:257.75px;font-size:29px;color:#be3a0c;">S</span>
<span class="t" style="left:361.58px;top:177.84px;font-size:12px;color:#444444;transform:scaleX(0.9902);">Arial</span>
<span class="t" style="left:499.928px;top:180.00px;font-size:12.4px;color:#595959;-webkit-text-stroke:0.45px #595959;transform:scaleX(1.1);">A</span>
<span class="t" style="left:522.3820000000001px;top:181.53px;font-size:10.6px;color:#595959;-webkit-text-stroke:0.45px #595959;transform:scaleX(1.08);">A</span>
<span class="t" style="left:363.03099999999995px;top:205.59px;font-size:12.3px;color:#3b3b3b;font-weight:bold;transform:scaleX(1.1);">Ж</span>
<span class="t" style="left:385.631px;top:205.59px;font-size:12.3px;color:#3b3b3b;font-weight:bold;font-style:italic;">К</span>
<span class="t" style="left:426.72px;top:204.53px;font-size:8px;color:#444;font-weight:bold;transform:scaleX(0.8048);">ab</span>
<span class="t" style="left:463.91px;top:204.60px;font-size:13px;color:#595959;-webkit-text-stroke:0.45px #595959;transform:scaleX(1.1);">A</span>
<span class="t" style="left:565.38px;top:204.84px;font-size:12px;color:#444444;transform:scaleX(0.9029);">Вставка</span>
<span class="t" style="left:614.58px;top:204.84px;font-size:12px;color:#444444;transform:scaleX(0.9335);">Удалить</span>
<span class="t" style="left:387.08px;top:252.84px;font-size:12px;color:#444;transform:scaleX(0.9511);">В<u>ы</u>резать</span>
<span class="t" style="left:387.08px;top:276.84px;font-size:12px;color:#444;transform:scaleX(1.0101);"><u>К</u>опировать</span>
<span class="t" style="left:389.08px;top:299.84px;font-size:12px;color:#444;font-weight:bold;transform:scaleX(0.9652);">Параметры вставки:</span>
<span class="t" style="left:387.08px;top:354.84px;font-size:12px;color:#444;transform:scaleX(0.9291);"><u>В</u>ставить</span>
<span class="t" style="left:387.08px;top:378.84px;font-size:12px;color:#444;transform:scaleX(0.9804);">Удалить <u>т</u>аблицу</span>
<span class="t" style="left:387.08px;top:402.84px;font-size:12px;color:#444;transform:scaleX(0.9934);">Выровнят<u>ь</u> высоту строк</span>
<span class="t" style="left:387.08px;top:426.84px;font-size:12px;color:#444;transform:scaleX(1.0068);">Выровнять <u>ш</u>ирину столбцов</span>
<span class="t" style="left:387.08px;top:452.84px;font-size:12px;color:#444;transform:scaleX(1.0030);"><u>С</u>тили оформления границ</span>
<span class="t" style="left:387.08px;top:476.84px;font-size:12px;color:#444;transform:scaleX(1.0146);">А<u>в</u>топодбор</span>
<span class="t" style="left:387.08px;top:500.84px;font-size:12px;color:#444;transform:scaleX(0.9638);"><u>Н</u>аправление текста...</span>
<span class="t" style="left:387.08px;top:524.84px;font-size:12px;color:#444;transform:scaleX(0.9436);"><u>В</u>ставить название...</span>
<span class="t" style="left:387.08px;top:548.84px;font-size:12px;color:#222;transform:scaleX(0.9707);"><u>С</u>войства таблицы...</span>
<span class="t" style="left:387.08px;top:573.84px;font-size:12px;color:#444;transform:scaleX(0.9913);">Создать примеча<u>н</u>ие</span>
<span class="t" style="left:8.08px;top:599.84px;font-size:12px;color:#444;transform:scaleX(0.9369);">Страница 1 из 1</span>
<span class="t" style="left:111.58px;top:599.84px;font-size:12px;color:#444;transform:scaleX(0.9426);">Слово 11 из 11</span>
<span class="t" style="left:240.88000000000002px;top:599.84px;font-size:12px;color:#444;transform:scaleX(0.9605);">английский (США)</span>
<span class="t" style="left:909.08px;top:599.84px;font-size:12px;color:#444;transform:scaleX(0.9288);">110 %</span>
</body></html>
